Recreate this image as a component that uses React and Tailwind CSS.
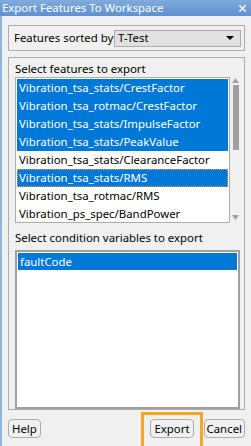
import { X } from "lucide-react";

const FEATURES = [
  { name: "Vibration_tsa_stats/CrestFactor", selected: true },
  { name: "Vibration_tsa_rotmac/CrestFactor", selected: true },
  { name: "Vibration_tsa_stats/ImpulseFactor", selected: true },
  { name: "Vibration_tsa_stats/PeakValue", selected: true },
  { name: "Vibration_tsa_stats/ClearanceFactor", selected: false },
  { name: "Vibration_tsa_stats/RMS", selected: true, focused: true },
  { name: "Vibration_tsa_rotmac/RMS", selected: false },
  { name: "Vibration_ps_spec/BandPower", selected: false },
];

export default function App() {
  return (
    <div
      className="w-[251px] h-[446px] overflow-hidden bg-[#f0f0f0] flex flex-col text-[11.4px] text-black"
      style={{ fontFamily: '"Noto Sans", "Open Sans", sans-serif' }}
    >
      {/* Title bar */}
      <div className="h-[16px] flex items-center justify-between pl-[2px] pr-[2px] bg-gradient-to-b from-[#80abdc] to-[#5f90cf] text-white">
        <span className="leading-[16px] whitespace-nowrap">Export Features To Workspace</span>
        <X className="w-[11px] h-[11px] mr-[1px]" strokeWidth={3} />
      </div>

      <div className="flex-1 flex flex-col border-l-[2px] border-[#8fb4e0] pl-[6px] pr-[6px]">
        {/* Sort panel */}
        <div className="mt-[9px] h-[26px] border border-[#adadad] flex items-center pl-[5px] pr-[3px]">
          <span className="w-[100px] whitespace-nowrap">Features sorted by</span>
          <div className="flex-1 h-[17px] border border-[#adadad] bg-[#e1e1e1] flex items-center justify-between pl-[3px] pr-[6px]">
            <span className="leading-none">T-Test</span>
            <svg width="8" height="4" viewBox="0 0 8 4">
              <path d="M0 0h8L4 4z" fill="#000" />
            </svg>
          </div>
        </div>

        {/* Main panel */}
        <div className="mt-[6px] h-[353px] border border-[#adadad] flex flex-col pl-[6px] pr-[4px]">
          <div className="mt-[2px] h-[17px] leading-[17px] whitespace-nowrap">Select features to export</div>
          <div className="flex h-[146px]">
            <div className="flex-1 border border-[#adadad] bg-white p-px flex flex-col">
              {FEATURES.map((f) => (
                <div
                  key={f.name}
                  className={`h-[18px] leading-[18px] pl-[2px] whitespace-nowrap ${
                    f.selected ? "bg-[#0078d7] text-white" : ""
                  } ${f.focused ? "outline-1 outline-dotted outline-[#f0a030] -outline-offset-1" : ""}`}
                >
                  {f.name}
                </div>
              ))}
            </div>
            <div className="w-[9px] ml-[1px] flex flex-col items-center">
              <svg width="7" height="5" viewBox="0 0 7 5" className="mt-[1px]">
                <path d="M0 5L3.5 0L7 5z" fill="#a0a0a0" />
              </svg>
              <div className="mt-[2px] w-[6px] h-[65px] bg-[#a0a0a0]" />
              <div className="flex-1" />
              <svg width="7" height="5" viewBox="0 0 7 5" className="mb-[3px]">
                <path d="M0 0h7L3.5 5z" fill="#a0a0a0" />
              </svg>
            </div>
          </div>
          <div className="mt-[6px] h-[17px] leading-[17px] whitespace-nowrap">Select condition variables to export</div>
          <div className="mt-[4px] h-[160px] border-2 border-[#a0a0a0] bg-white p-px">
            <div className="h-[17px] leading-[17px] pl-[2px] bg-[#0078d7] text-white">faultCode</div>
          </div>
        </div>

        {/* Buttons */}
        <div className="mt-[9px] flex items-start">
          <button className="h-[19px] px-[3px] rounded-[4px] border border-[#adadad] leading-none">
            Help
          </button>
          <div className="flex-1" />
          <div className="border-[3px] border-[#f5a623] px-[6px] pt-[4px] pb-[10px] -mt-[7px] mr-[1px]">
            <button className="h-[19px] px-[3px] rounded-[4px] border border-[#adadad] leading-none">
              Export
            </button>
          </div>
          <button className="h-[19px] px-[2px] rounded-[4px] border border-[#adadad] leading-none">
            Cancel
          </button>
        </div>
      </div>
    </div>
  );
}
